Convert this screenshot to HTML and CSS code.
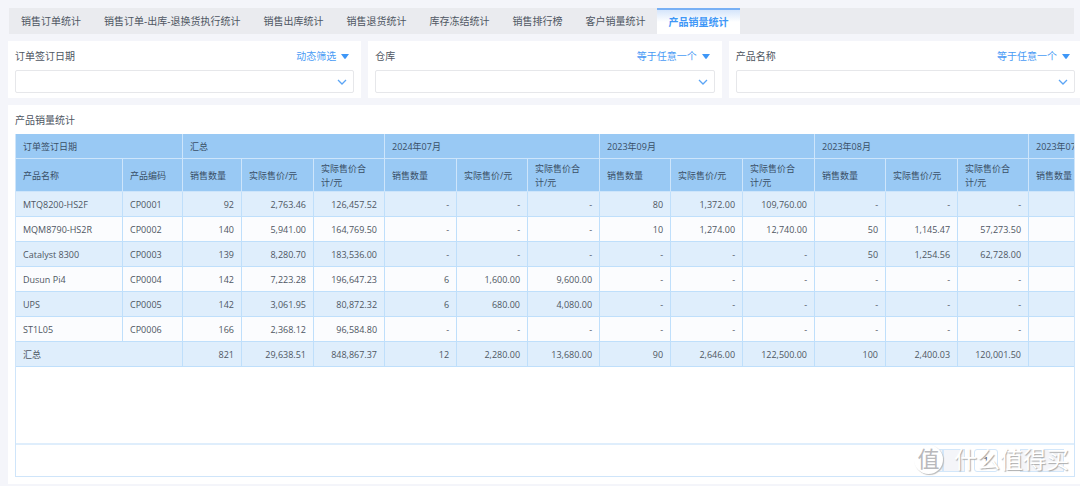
FILE: index.html
```html
<!DOCTYPE html>
<html lang="zh-CN">
<head>
<meta charset="utf-8">
<title>产品销量统计</title>
<link rel="stylesheet" href="styles.css">
</head>
<body>
<nav class="tabs">
  <button class="tab" type="button">销售订单统计</button>
  <button class="tab" type="button">销售订单-出库-退换货执行统计</button>
  <button class="tab" type="button">销售出库统计</button>
  <button class="tab" type="button">销售退货统计</button>
  <button class="tab" type="button">库存冻结统计</button>
  <button class="tab" type="button">销售排行榜</button>
  <button class="tab" type="button">客户销量统计</button>
  <button class="tab tab-active" type="button">产品销量统计</button>
</nav>

<section class="filters">
  <div class="filter">
    <div class="filter-head">
      <label for="f-date">订单签订日期</label>
      <button class="mode" type="button">动态筛选<svg class="caret" viewBox="0 0 8 5"><path d="M0 0h8L4.7 4.5q-.7.8-1.4 0z"/></svg></button>
    </div>
    <div class="field"><select id="f-date"><option></option></select><svg class="chevron" viewBox="0 0 10 6"><path d="M1 1l4 4 4-4"/></svg></div>
  </div>
  <div class="filter">
    <div class="filter-head">
      <label for="f-store">仓库</label>
      <button class="mode" type="button">等于任意一个<svg class="caret" viewBox="0 0 8 5"><path d="M0 0h8L4.7 4.5q-.7.8-1.4 0z"/></svg></button>
    </div>
    <div class="field"><select id="f-store"><option></option></select><svg class="chevron" viewBox="0 0 10 6"><path d="M1 1l4 4 4-4"/></svg></div>
  </div>
  <div class="filter">
    <div class="filter-head">
      <label for="f-product">产品名称</label>
      <button class="mode" type="button">等于任意一个<svg class="caret" viewBox="0 0 8 5"><path d="M0 0h8L4.7 4.5q-.7.8-1.4 0z"/></svg></button>
    </div>
    <div class="field"><select id="f-product"><option></option></select><svg class="chevron" viewBox="0 0 10 6"><path d="M1 1l4 4 4-4"/></svg></div>
  </div>
</section>

<main class="report">
  <h1 class="report-title">产品销量统计</h1>
  <div class="grid">
    <div class="grid-body">
      <table class="data">
        <colgroup>
          <col class="c-name"><col class="c-code"><col class="c-qty"><col class="c-wide"><col class="c-mid">
          <col class="c-wide"><col class="c-mid"><col class="c-wide">
          <col class="c-mid"><col class="c-wide"><col class="c-wide">
          <col class="c-mid"><col class="c-wide"><col class="c-mid">
          <col class="c-wide">
        </colgroup>
        <thead>
          <tr class="group"><th colspan="2">订单签订日期</th><th colspan="3">汇总</th><th colspan="3">2024年07月</th><th colspan="3">2023年09月</th><th colspan="3">2023年08月</th><th>2023年07月</th></tr>
          <tr class="names"><th>产品名称</th><th>产品编码</th><th>销售数量</th><th>实际售价/元</th><th>实际售价合计/元</th><th>销售数量</th><th>实际售价/元</th><th>实际售价合计/元</th><th>销售数量</th><th>实际售价/元</th><th>实际售价合计/元</th><th>销售数量</th><th>实际售价/元</th><th>实际售价合计/元</th><th>销售数量</th></tr>
        </thead>
        <tbody>
          <tr><td class="txt">MTQ8200-HS2F</td><td class="txt">CP0001</td><td>92</td><td>2,763.46</td><td>126,457.52</td><td>-</td><td>-</td><td>-</td><td>80</td><td>1,372.00</td><td>109,760.00</td><td>-</td><td>-</td><td>-</td><td></td></tr>
          <tr><td class="txt">MQM8790-HS2R</td><td class="txt">CP0002</td><td>140</td><td>5,941.00</td><td>164,769.50</td><td>-</td><td>-</td><td>-</td><td>10</td><td>1,274.00</td><td>12,740.00</td><td>50</td><td>1,145.47</td><td>57,273.50</td><td></td></tr>
          <tr><td class="txt">Catalyst 8300</td><td class="txt">CP0003</td><td>139</td><td>8,280.70</td><td>183,536.00</td><td>-</td><td>-</td><td>-</td><td>-</td><td>-</td><td>-</td><td>50</td><td>1,254.56</td><td>62,728.00</td><td></td></tr>
          <tr><td class="txt">Dusun Pi4</td><td class="txt">CP0004</td><td>142</td><td>7,223.28</td><td>196,647.23</td><td>6</td><td>1,600.00</td><td>9,600.00</td><td>-</td><td>-</td><td>-</td><td>-</td><td>-</td><td>-</td><td></td></tr>
          <tr><td class="txt">UPS</td><td class="txt">CP0005</td><td>142</td><td>3,061.95</td><td>80,872.32</td><td>6</td><td>680.00</td><td>4,080.00</td><td>-</td><td>-</td><td>-</td><td>-</td><td>-</td><td>-</td><td></td></tr>
          <tr><td class="txt">ST1L05</td><td class="txt">CP0006</td><td>166</td><td>2,368.12</td><td>96,584.80</td><td>-</td><td>-</td><td>-</td><td>-</td><td>-</td><td>-</td><td>-</td><td>-</td><td>-</td><td></td></tr>
          <tr><td class="txt" colspan="2">汇总</td><td>821</td><td>29,638.51</td><td>848,867.37</td><td>12</td><td>2,280.00</td><td>13,680.00</td><td>90</td><td>2,646.00</td><td>122,500.00</td><td>100</td><td>2,400.03</td><td>120,001.50</td><td></td></tr>
        </tbody>
      </table>
    </div>
    <div class="pager">
      <div class="page-pair">
        <button class="page-btn" type="button" aria-label="首页"></button>
        <button class="page-btn" type="button" aria-label="上一页"></button>
      </div>
      <button class="page-btn page-current" type="button">1</button>
      <div class="page-pair">
        <button class="page-btn" type="button" aria-label="下一页"></button>
        <button class="page-btn" type="button" aria-label="末页"></button>
      </div>
    </div>
  </div>
</main>
<div class="watermark"><span class="mark-badge">值</span><span class="mark-text">什么值得买</span></div>
</body>
</html>
```
FILE: styles.css
```css
* { box-sizing: border-box; }
body {
  margin: 0;
  padding: 8px 0 2px 8px;
  min-height: 100vh;
  display: flex;
  flex-direction: column;
  gap: 7px;
  background: #f4f5fa;
  color: #4e5662;
  font: 10px/16px "Open Sans", "Noto Sans CJK SC", sans-serif;
  overflow: hidden;
}
button { border: 0; padding: 0; background: none; font: inherit; color: inherit; }

.tabs { display: flex; height: 26px; margin: 0 6px 0 1px; padding-left: 1px; background: #eaebef; }
.tab { padding: 0 12px 0 11px; }
.tab-active {
  color: #3e97f7;
  font-weight: 700;
  border-top: 2px solid #78b0f5;
  background: linear-gradient(#d5e5fb, #fff 12px);
}

.filters { display: grid; grid-template-columns: repeat(3, 1fr); gap: 7px; margin-right: -2px; }
.filter { padding: 7px 7px 5px; background: #fff; }
.filter-head { display: flex; justify-content: space-between; padding-right: 5px; margin-bottom: 6px; }
.mode { display: flex; align-items: center; gap: 5px; color: #4a9bf5; }
.caret { width: 8px; height: 5px; fill: #3e97f7; }
.field { display: flex; align-items: center; height: 23px; padding-right: 6px; border: 1px solid #e6e7ea; border-radius: 2px; }
.field select { flex: 1; height: 100%; border: 0; background: none; appearance: none; font: inherit; }
.chevron { width: 10px; height: 6px; fill: none; stroke: #5ba5f5; stroke-width: 1.3; }

.report { flex: 1; display: flex; flex-direction: column; padding: 7px 5px 7px 7px; background: #fff; }
.report-title { margin: 0 0 6px; font-size: 10px; font-weight: 400; }
.grid { flex: 1; display: flex; flex-direction: column; border: 1px solid #cfe5fa; border-top: 0; }
.grid-body { flex: 1; overflow: hidden; }

.data { width: 1060px; table-layout: fixed; border-collapse: separate; border-spacing: 0; font-size: 9px; line-height: 14px; }
.c-name { width: 107px; }
.c-code { width: 60px; }
.c-qty { width: 59px; }
.c-wide { width: 72px; }
.c-mid { width: 71px; }
.data th { padding: 2px 7px 0; border-right: 1px solid #cde5fb; border-bottom: 1px solid #cde5fb; background: #99c9f4; color: #3a4f66; font-weight: 400; text-align: left; }
.group th { height: 25px; white-space: nowrap; }
.names th { height: 33px; }
.data td { height: 25px; padding: 2px 7px 0; border-right: 1px solid #bfdffb; border-bottom: 1px solid #bfdffb; background: #fbfcfe; text-align: right; }
.data tr:nth-child(odd) td { background: #dfeefc; }
.data .txt { text-align: left; }

.pager { display: flex; justify-content: flex-end; height: 33px; padding: 4px 10px 4px 0; border-top: 2px solid #dfeefc; }
.page-pair { display: flex; }
.page-btn { width: 22px; border: 1px solid #d3e7fa; background: #f4f5f9; }
.page-current { width: 24px; margin: 0 22px 0 9px; background: #fff; border-radius: 3px; }

.watermark { position: absolute; right: 11px; bottom: 12px; display: flex; align-items: center; gap: 11px; color: #fff; line-height: 30px; }
.mark-badge { width: 29px; height: 29px; border-radius: 50%; background: #fff; color: #b9b9bc; font-size: 22px; line-height: 27px; text-align: center; box-shadow: 1px 1px 1px #bbb; }
.mark-text { font-size: 23px; text-shadow: 1px 1px 1px #aaa; }
```
